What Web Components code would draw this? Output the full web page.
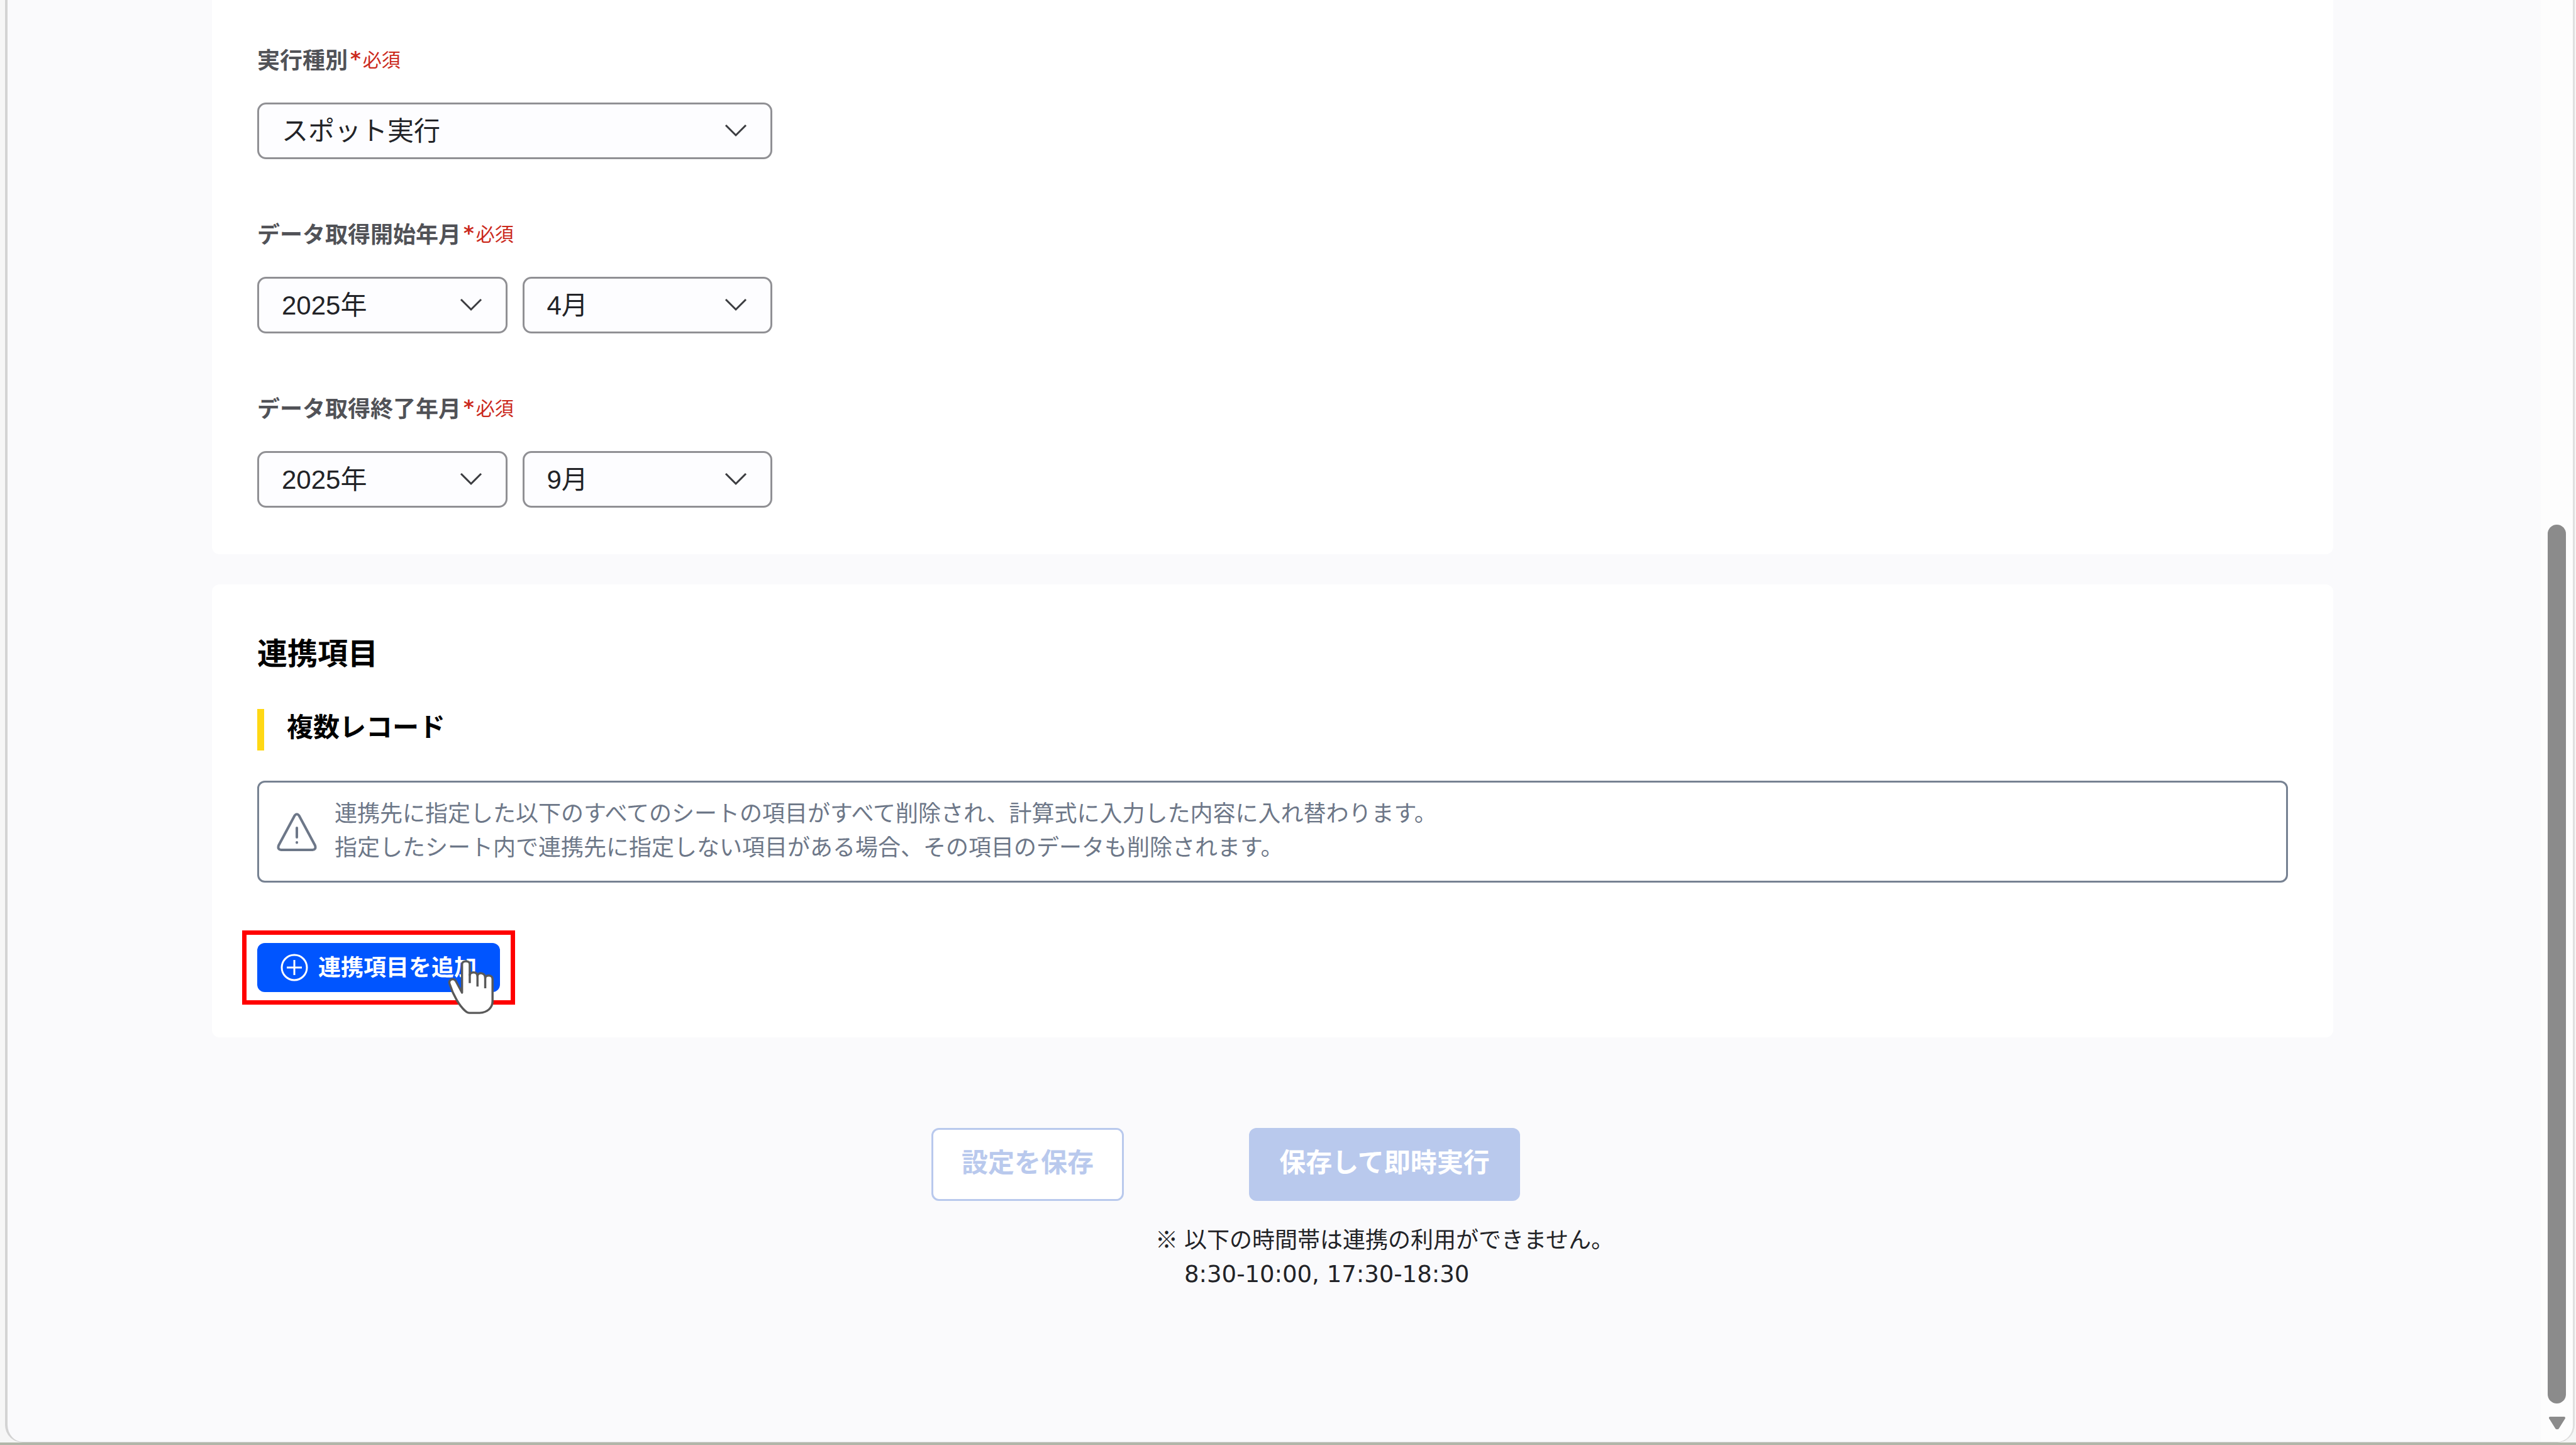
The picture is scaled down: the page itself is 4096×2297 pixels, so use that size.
<!DOCTYPE html>
<html lang="ja">
<head>
<meta charset="utf-8">
<title>連携設定</title>
<style>
    body {
        margin: 0;
        background: #f6f6f6;
        color: #222327;
        font-family: "Noto Sans CJK JP", sans-serif;
        font-size: 36px;
        line-height: 54px;
    }

    .hours {
        font-family: "DejaVu Sans", sans-serif;
        font-size: 37px;
    }
</style>
</head>
<body>
<app-window>
    <panel-card>
        <form-field name="type" label="実行種別" values="スポット実行"></form-field>
        <form-field name="start" label="データ取得開始年月" values="2025年,4月"></form-field>
        <form-field name="end" label="データ取得終了年月" values="2025年,9月"></form-field>
    </panel-card>
    <panel-card>
        <section-title>連携項目<span slot="sub">複数レコード</span></section-title>
        <info-box>連携先に指定した以下のすべてのシートの項目がすべて削除され、計算式に入力した内容に入れ替わります。<br>指定したシート内で連携先に指定しない項目がある場合、その項目のデータも削除されます。</info-box>
        <add-button>連携項目を追加</add-button>
    </panel-card>
    <form-actions>
        <span slot="save">設定を保存</span>
        <span slot="run">保存して即時実行</span>
        <span slot="note">以下の時間帯は連携の利用ができません。<br><span class="hours">8:30-10:00, 17:30-18:30</span></span>
    </form-actions>
    <scroll-bar slot="scrollbar"></scroll-bar>
</app-window>

<script>
function makeTemplate(html) {
    const template = document.createElement('template');
    template.innerHTML = html;
    return template;
}

class BaseElement extends HTMLElement {
    constructor() {
        super();
        this.attachShadow({ mode: 'open' });
        this.shadowRoot.appendChild(this.constructor.template.content.cloneNode(true));
    }
}

class AppWindow extends BaseElement {
    static template = makeTemplate(`
        <style>
            :host {
                display: flex;
                box-sizing: border-box;
                min-height: 100vh;
                padding: 0 2px 0 8px;
                border-bottom: 4px solid #b1b6a9;
            }

            .frame {
                flex: 1;
                display: flex;
                overflow: hidden;
                background: #fafafc;
                border: solid #d3d3d3;
                border-width: 0 3px 1px 4px;
                border-right-color: #dfdfdf;
                border-radius: 0 0 28px 28px;
            }

            main {
                flex: 1;
                display: flex;
                flex-direction: column;
                gap: 48px;
                padding: 0 330px 0 325px;
            }
        </style>
        <div class="frame">
            <main><slot></slot></main>
            <slot name="scrollbar"></slot>
        </div>
    `);
}

class PanelCard extends BaseElement {
    static template = makeTemplate(`
        <style>
            :host {
                display: flex;
                flex-direction: column;
                padding: 72px;
                background: #fff;
                border-radius: 12px;
            }

            :host(:first-child) {
                gap: 90px;
                padding-top: 66px;
                padding-bottom: 74px;
                border-radius: 0 0 12px 12px;
            }
        </style>
        <slot></slot>
    `);
}

class FormField extends BaseElement {
    static template = makeTemplate(`
        <style>
            :host {
                display: flex;
                flex-direction: column;
                gap: 43px;
                width: 819px;
            }

            label {
                display: flex;
                gap: 4px;
                color: #515257;
                font-weight: bold;
            }

            .required {
                display: flex;
                gap: 3px;
                color: #cb2a1d;
                font-size: 30px;
                font-weight: normal;
            }

            .required b {
                font-family: "DejaVu Sans", sans-serif;
                font-size: 32px;
            }

            .boxes {
                display: grid;
                grid-auto-flow: column;
                grid-auto-columns: 1fr;
                gap: 24px;
            }

            .box {
                display: grid;
                align-items: center;
            }

            .box > * {
                grid-area: 1 / 1;
            }

            select {
                appearance: none;
                width: 100%;
                height: 90px;
                padding: 0 36px;
                border: 3px solid #909094;
                border-radius: 14px;
                background: #fdfdff;
                color: #222327;
                font: 42px "Liberation Sans", "Noto Sans CJK JP", sans-serif;
            }

            svg {
                justify-self: end;
                margin-right: 40px;
                pointer-events: none;
            }
        </style>
        <label for="field0"><span class="text"></span><span class="required"><b>*</b>必須</span></label>
        <div class="boxes"></div>
    `);

    connectedCallback() {
        const label = this.getAttribute('label');
        this.shadowRoot.querySelector('.text').textContent = label;
        this.shadowRoot.querySelector('.boxes').innerHTML = this.getAttribute('values').split(',').map((value, i) => `
            <div class="box">
                <select id="field${i}" name="${this.getAttribute('name')}${i}" ${i ? `aria-label="${label}(月)"` : ''}>
                    <option>${value}</option>
                </select>
                <svg width="36" height="22" viewBox="0 0 36 22" fill="none" stroke="#3b3c40" stroke-width="3"><path d="M2 2l16 16L34 2"/></svg>
            </div>
        `).join('');
    }
}

class SectionTitle extends BaseElement {
    static template = makeTemplate(`
        <style>
            :host {
                display: flex;
                flex-direction: column;
                gap: 58px;
                color: #000;
            }

            h2, h3 {
                margin: 0;
                font-weight: bold;
            }

            h2 {
                font-size: 48px;
                line-height: 68px;
            }

            h3 {
                padding: 0 0 14px 36px;
                border-left: 11px solid #ffd814;
                font-size: 42px;
                line-height: 52px;
            }
        </style>
        <h2><slot></slot></h2>
        <h3><slot name="sub"></slot></h3>
    `);
}

class InfoBox extends BaseElement {
    static template = makeTemplate(`
        <style>
            :host {
                display: flex;
                align-items: center;
                gap: 28px;
                margin: 48px 0 96px;
                padding: 19px 28px 29px;
                border: 3px solid #778292;
                border-radius: 12px;
                color: #6d7788;
            }

            svg {
                flex: none;
                margin-top: 12px;
            }
        </style>
        <svg width="64" height="62" viewBox="0 0 64 62" fill="none" stroke="#6d7788" stroke-width="4" stroke-linejoin="round" stroke-linecap="round">
            <path d="M28.500 4.500Q32 0 35.500 4.500L61 52Q63 58.500 57 59H7Q1 58.500 3 52Z"/>
            <path d="M32 24v15"/>
            <path d="M32 47v.5"/>
        </svg>
        <div><slot></slot></div>
    `);
}

class AddButton extends BaseElement {
    static template = makeTemplate(`
        <style>
            :host {
                display: block;
                position: relative;
                align-self: flex-start;
            }

            button {
                display: flex;
                align-items: center;
                gap: 16px;
                height: 78px;
                padding: 0 37px;
                border: 0;
                border-radius: 12px;
                background: #0055ff;
                color: #fff;
                font: bold 36px/54px "Noto Sans CJK JP", sans-serif;
            }

            button span {
                padding-bottom: 6px;
            }

            /* red callout and pointer lie over the button */
            .callout {
                position: absolute;
                inset: -20px -24px;
                border: 7px solid #f00;
                pointer-events: none;
            }

            .pointer {
                position: absolute;
                right: 9px;
                bottom: -35px;
            }
        </style>
        <button type="button">
            <svg width="44" height="44" viewBox="0 0 44 44" fill="none" stroke="#fff" stroke-width="3"><circle cx="22" cy="22" r="20"/><path d="M22 10v24M10 22h24"/></svg>
            <span><slot></slot></span>
        </button>
        <div class="callout"></div>
        <svg class="pointer" width="74" height="86" viewBox="0 0 231 273" fill="#fff" stroke="#595959" stroke-width="11" stroke-linejoin="round">
            <path d="M70 165L39 107C28 88 0 98 7 120C25 178 57 232 85 256Q96 267 108 267H158C202 265 224 238 224 208V96C224 75 190 73 187 91C186 62 151 60 148 80C145 56 112 60 109 76V22C109 1 70 1 70 22Z"/>
            <path d="M109 70v47M148 78v56M187 90v53" fill="none"/>
        </svg>
    `);
}

class FormActions extends BaseElement {
    static template = makeTemplate(`
        <style>
            :host {
                display: flex;
                justify-content: center;
                align-items: flex-start;
                gap: 50px;
                padding-top: 96px;
            }

            .run {
                display: flex;
                flex-direction: column;
                align-items: center;
                gap: 32px;
            }

            button {
                height: 116px;
                padding: 0 45px 12px;
                border: 3px solid #b9c9ed;
                border-radius: 12px;
                background: #fff;
                color: #b9c9ed;
                font: bold 42px/60px "Noto Sans CJK JP", sans-serif;
            }

            .run button {
                background: #b9c9ed;
                color: #fff;
            }

            .note {
                display: flex;
                gap: 10px;
            }
        </style>
        <button type="button" disabled><slot name="save"></slot></button>
        <div class="run">
            <button type="button" disabled><slot name="run"></slot></button>
            <div class="note"><span>※</span><slot name="note"></slot></div>
        </div>
    `);
}

class ScrollBar extends BaseElement {
    static template = makeTemplate(`
        <style>
            :host {
                display: flex;
                flex-direction: column;
                align-items: center;
                justify-content: flex-end;
                gap: 21px;
                width: 51px;
                padding-bottom: 20px;
                box-sizing: border-box;
                background: #fdfdfd;
            }

            .thumb {
                width: 29px;
                height: 61.5%;
                border-radius: 15px;
                background: #8b8b8b;
            }
        </style>
        <div class="thumb"></div>
        <svg width="26" height="20" viewBox="0 0 26 20" fill="#8b8b8b" stroke="#8b8b8b" stroke-width="4" stroke-linejoin="round"><path d="M2 2h22L14 18h-2z"/></svg>
    `);
}

window.customElements.define('app-window', AppWindow);
window.customElements.define('panel-card', PanelCard);
window.customElements.define('form-field', FormField);
window.customElements.define('section-title', SectionTitle);
window.customElements.define('info-box', InfoBox);
window.customElements.define('add-button', AddButton);
window.customElements.define('form-actions', FormActions);
window.customElements.define('scroll-bar', ScrollBar);
</script>
</body>
</html>
